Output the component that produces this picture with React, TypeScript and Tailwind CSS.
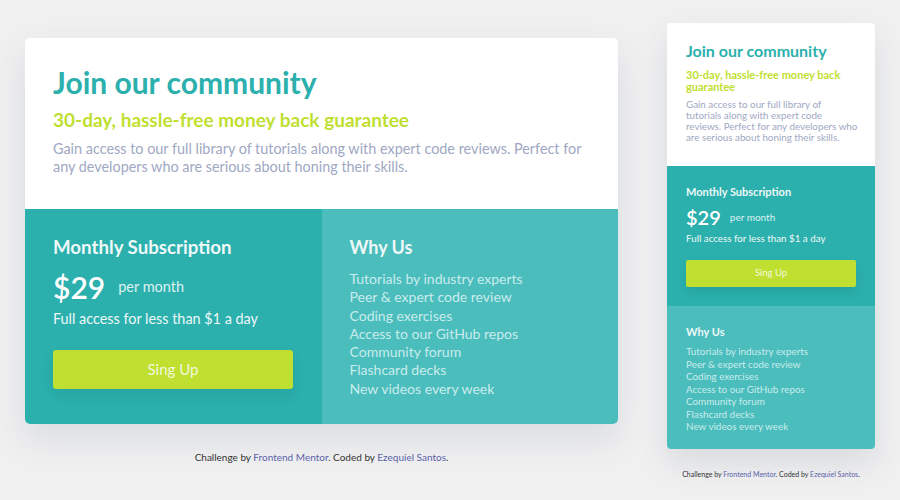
const features = [
  "Tutorials by industry experts",
  "Peer & expert code review",
  "Coding exercises",
  "Access to our GitHub repos",
  "Community forum",
  "Flashcard decks",
  "New videos every week",
];

const mobileIntro = [
  "Gain access to our full library of",
  "tutorials along with expert code",
  "reviews. Perfect for any developers who",
  "are serious about honing their skills.",
];

function Footer({ className }: { className: string }) {
  return (
    <p className={`text-center text-[#333] ${className}`}>
      Challenge by <a href="#" className="text-[#5a5fa8]">Frontend Mentor</a>. Coded by{" "}
      <a href="#" className="text-[#5a5fa8]">Ezequiel Santos</a>.
    </p>
  );
}

function DesktopCard() {
  return (
    <div className="w-[593px]">
      <div className="overflow-hidden rounded-[5px] bg-white shadow-[0_15px_35px_rgba(60,70,90,0.12)]">
        <div className="px-[28px] pt-[26px] pb-[33px]">
          <h1 className="text-[30px] font-bold leading-[36px] text-[#2bb0ad]">Join our community</h1>
          <h2 className="mt-[8px] text-[19px] font-bold leading-[24px] text-[#bfe031]">
            30-day, hassle-free money back guarantee
          </h2>
          <p className="mt-[8px] text-[14.4px] leading-[18px] text-[#a0a8c3]">
            Gain access to our full library of tutorials along with expert code reviews. Perfect for any
            developers who are serious about honing their skills.
          </p>
        </div>
        <div className="grid grid-cols-2">
          <div className="bg-[#2bb0ad] px-[28px] pt-[26px] pb-[35px] text-white">
            <h3 className="text-[18.7px] font-bold leading-[24px] text-[#eef8f8]">Monthly Subscription</h3>
            <div className="mt-[12px] flex items-center gap-[13px]">
              <span className="text-[30px] font-semibold leading-[32px]">$29</span>
              <span className="text-[14.5px] text-[#def2f2]">per month</span>
            </div>
            <p className="mt-[6px] text-[14.4px] leading-[20px] text-[#eef8f8]">Full access for less than $1 a day</p>
            <button className="mt-[21px] h-[39px] w-[240px] rounded-[3px] bg-[#bfe031] text-[15px] text-[#f2f8dc] shadow-[0_6px_14px_rgba(0,0,0,0.08)]">
              Sing Up
            </button>
          </div>
          <div className="bg-[#4bbdbc] px-[28px] pt-[26px] pb-[24px]">
            <h3 className="text-[18px] font-bold leading-[24px] text-[#eef8f8]">Why Us</h3>
            <ul className="mt-[11px] text-[14px] leading-[18.3px] text-[#c9ecec]">
              {features.map((f) => (
                <li key={f}>{f}</li>
              ))}
            </ul>
          </div>
        </div>
      </div>
      <Footer className="mt-[26px] text-[10px]" />
    </div>
  );
}

function MobileCard() {
  return (
    <div className="w-[208px]">
      <div className="overflow-hidden rounded-[4px] bg-white shadow-[0_15px_30px_rgba(60,70,90,0.12)]">
        <div className="px-[19px] pt-[18px] pb-[23px]">
          <h1 className="text-[16px] font-bold leading-[20px] text-[#2bb0ad]">Join our community</h1>
          <h2 className="mt-[8px] text-[11px] font-bold leading-[12px] text-[#bfe031]">
            30-day, hassle-free money back guarantee
          </h2>
          <p className="mt-[6px] text-[9.8px] leading-[11px] text-[#a0a8c3]">
            {mobileIntro.map((line) => (
              <span key={line} className="block whitespace-nowrap">
                {line}
              </span>
            ))}
          </p>
        </div>
        <div className="bg-[#2bb0ad] px-[19px] pt-[19px] pb-[19px]">
          <h3 className="text-[11px] font-bold leading-[14px] text-[#eef8f8]">Monthly Subscription</h3>
          <div className="mt-[7px] flex items-center gap-[9px] text-white">
            <span className="text-[20px] font-semibold leading-[22px]">$29</span>
            <span className="text-[10px] text-[#def2f2]">per month</span>
          </div>
          <p className="mt-[3px] text-[9.8px] leading-[14px] text-[#eef8f8]">Full access for less than $1 a day</p>
          <button className="mt-[15px] h-[27px] w-full rounded-[2px] bg-[#bfe031] text-[9.5px] text-[#f2f8dc] shadow-[0_5px_10px_rgba(0,0,0,0.08)]">
            Sing Up
          </button>
        </div>
        <div className="bg-[#4bbdbc] px-[19px] pt-[19px] pb-[16px]">
          <h3 className="text-[11px] font-bold leading-[14px] text-[#eef8f8]">Why Us</h3>
          <ul className="mt-[6px] text-[9.9px] leading-[12.5px] text-[#c9ecec]">
            {features.map((f) => (
              <li key={f}>{f}</li>
            ))}
          </ul>
        </div>
      </div>
      <Footer className="mt-[20px] text-[7px]" />
    </div>
  );
}

export default function App() {
  return (
    <div className="flex h-[500px] w-[900px] items-start bg-[#f0f0f1] font-['Lato','Open_Sans',sans-serif]">
      <div className="ml-[25px] mt-[38px]">
        <DesktopCard />
      </div>
      <div className="ml-[49px] mt-[23px]">
        <MobileCard />
      </div>
    </div>
  );
}
